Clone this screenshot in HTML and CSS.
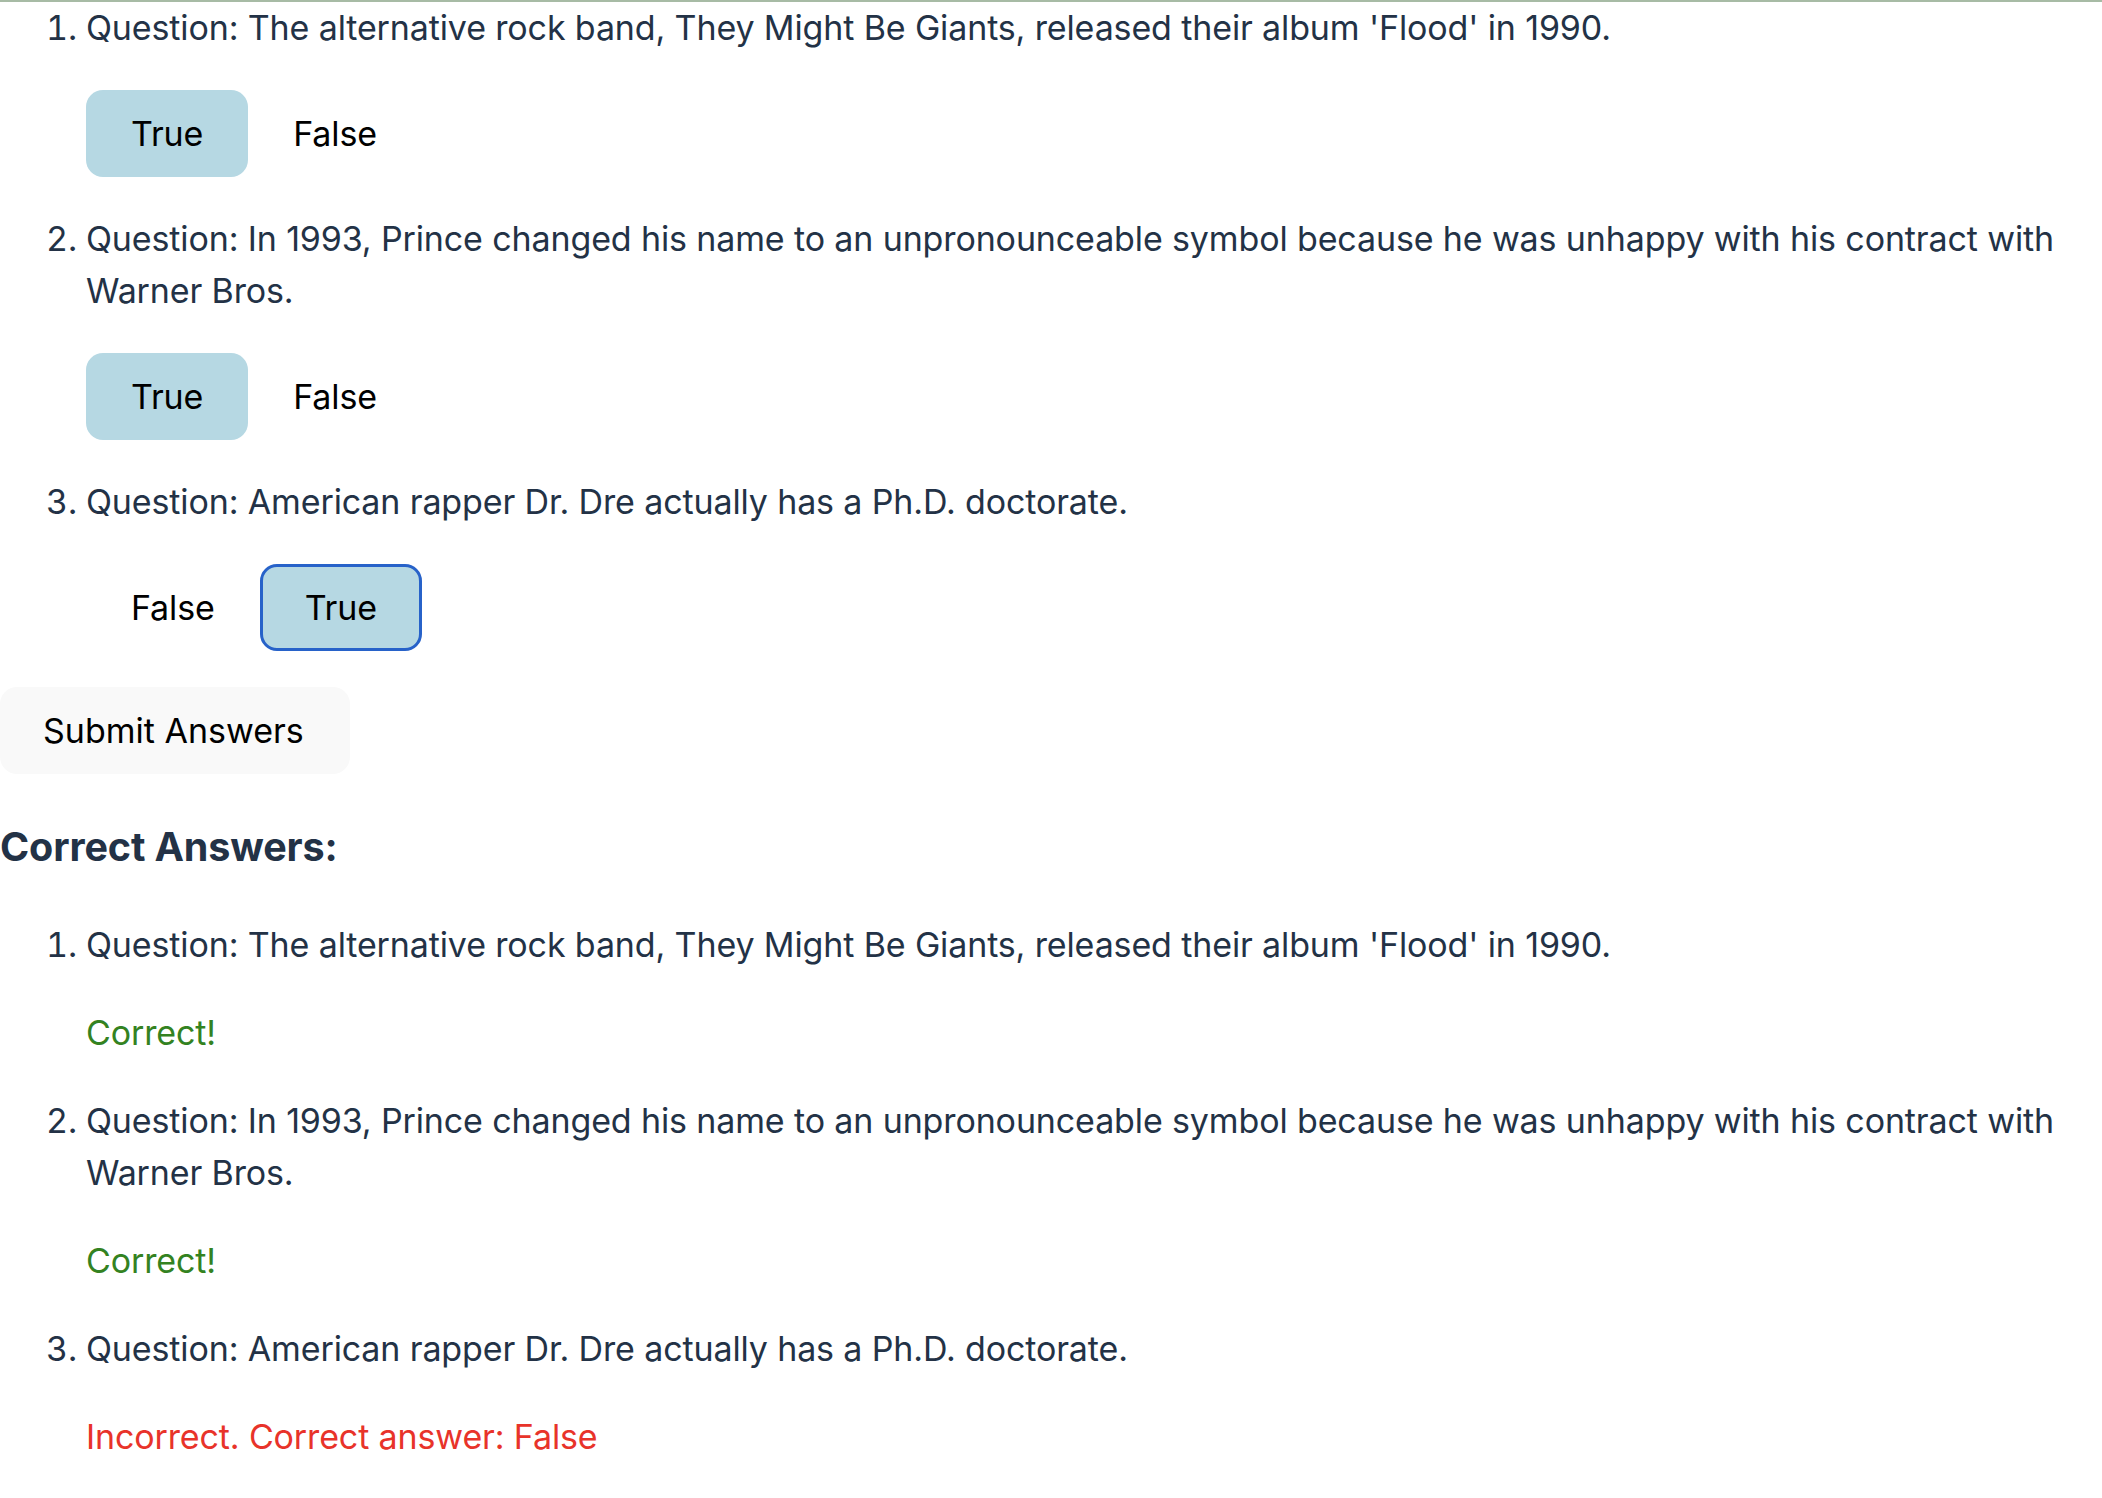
FILE: index.html
```html
<!DOCTYPE html>
<html lang="en">
<head>
<meta charset="utf-8">
<title>Quiz</title>
<link rel="stylesheet" href="styles.css">
</head>
<body>
<div class="page">
  <ol class="quiz">
    <li class="item">
      <div class="item-body">
        <p class="question">Question: The alternative rock band, They Might Be Giants, released their album 'Flood' in 1990.</p>
        <div class="options">
          <button class="opt selected">True</button>
          <button class="opt">False</button>
        </div>
      </div>
    </li>
    <li class="item">
      <div class="item-body">
        <p class="question">Question: In 1993, Prince changed his name to an unpronounceable symbol because he was unhappy with his contract with Warner Bros.</p>
        <div class="options">
          <button class="opt selected">True</button>
          <button class="opt">False</button>
        </div>
      </div>
    </li>
    <li class="item">
      <div class="item-body">
        <p class="question">Question: American rapper Dr. Dre actually has a Ph.D. doctorate.</p>
        <div class="options">
          <button class="opt">False</button>
          <button class="opt selected focused">True</button>
        </div>
      </div>
    </li>
  </ol>
  <button class="submit">Submit Answers</button>
  <h3 class="results-title">Correct Answers:</h3>
  <ol class="quiz results">
    <li class="item">
      <div class="item-body">
        <p class="question">Question: The alternative rock band, They Might Be Giants, released their album 'Flood' in 1990.</p>
        <p class="verdict ok">Correct!</p>
      </div>
    </li>
    <li class="item">
      <div class="item-body">
        <p class="question">Question: In 1993, Prince changed his name to an unpronounceable symbol because he was unhappy with his contract with Warner Bros.</p>
        <p class="verdict ok">Correct!</p>
      </div>
    </li>
    <li class="item">
      <div class="item-body">
        <p class="question">Question: American rapper Dr. Dre actually has a Ph.D. doctorate.</p>
        <p class="verdict bad">Incorrect. Correct answer: False</p>
      </div>
    </li>
  </ol>
</div>
</body>
</html>
```

FILE: styles.css
```css
html, body {
  margin: 0;
  padding: 0;
  background: #ffffff;
}

body {
  font-family: Inter, "Noto Sans", "Liberation Sans", sans-serif;
  font-size: 34px;
  line-height: 52px;
  letter-spacing: -0.13px;
  color: #233246;
  border-top: 2px solid #a7bba5;
}

.page {
  display: flex;
  flex-direction: column;
  align-items: flex-start;
}

.quiz {
  display: block;
  margin: 0;
  padding: 0 0 0 86px;
  width: 100%;
  box-sizing: border-box;
  list-style: decimal outside;
}

.item {
  display: list-item;
}

.item + .item {
  margin-top: 36px;
}

.item-body {
  display: flex;
  flex-direction: column;
  align-items: flex-start;
  gap: 36px;
}

.question {
  margin: 0;
}

.options {
  display: flex;
}

.opt {
  font-family: inherit;
  font-size: 34px;
  line-height: 41px;
  letter-spacing: -0.13px;
  color: #000;
  background: transparent;
  border: 3px solid transparent;
  border-radius: 17px;
  padding: 20px 42px;
  margin: 0;
  cursor: pointer;
}

.opt.selected {
  background: #b6d8e3;
}

.opt.focused {
  border-color: #2762c9;
}

.submit {
  margin: 36px 0 0 0;
  font-family: inherit;
  font-size: 34px;
  line-height: 41px;
  letter-spacing: 0;
  color: #000;
  background: #f9f9f9;
  border: 0;
  border-radius: 17px;
  padding: 23px 46px 23px 43px;
  cursor: pointer;
}

.results-title {
  margin: 43px 0 41px 0;
  font-size: 39.5px;
  line-height: 61px;
  font-weight: 700;
  color: #233246;
}

.verdict {
  margin: 0;
}

.verdict.ok {
  color: #338221;
}

.verdict.bad {
  color: #e8332a;
}
```
